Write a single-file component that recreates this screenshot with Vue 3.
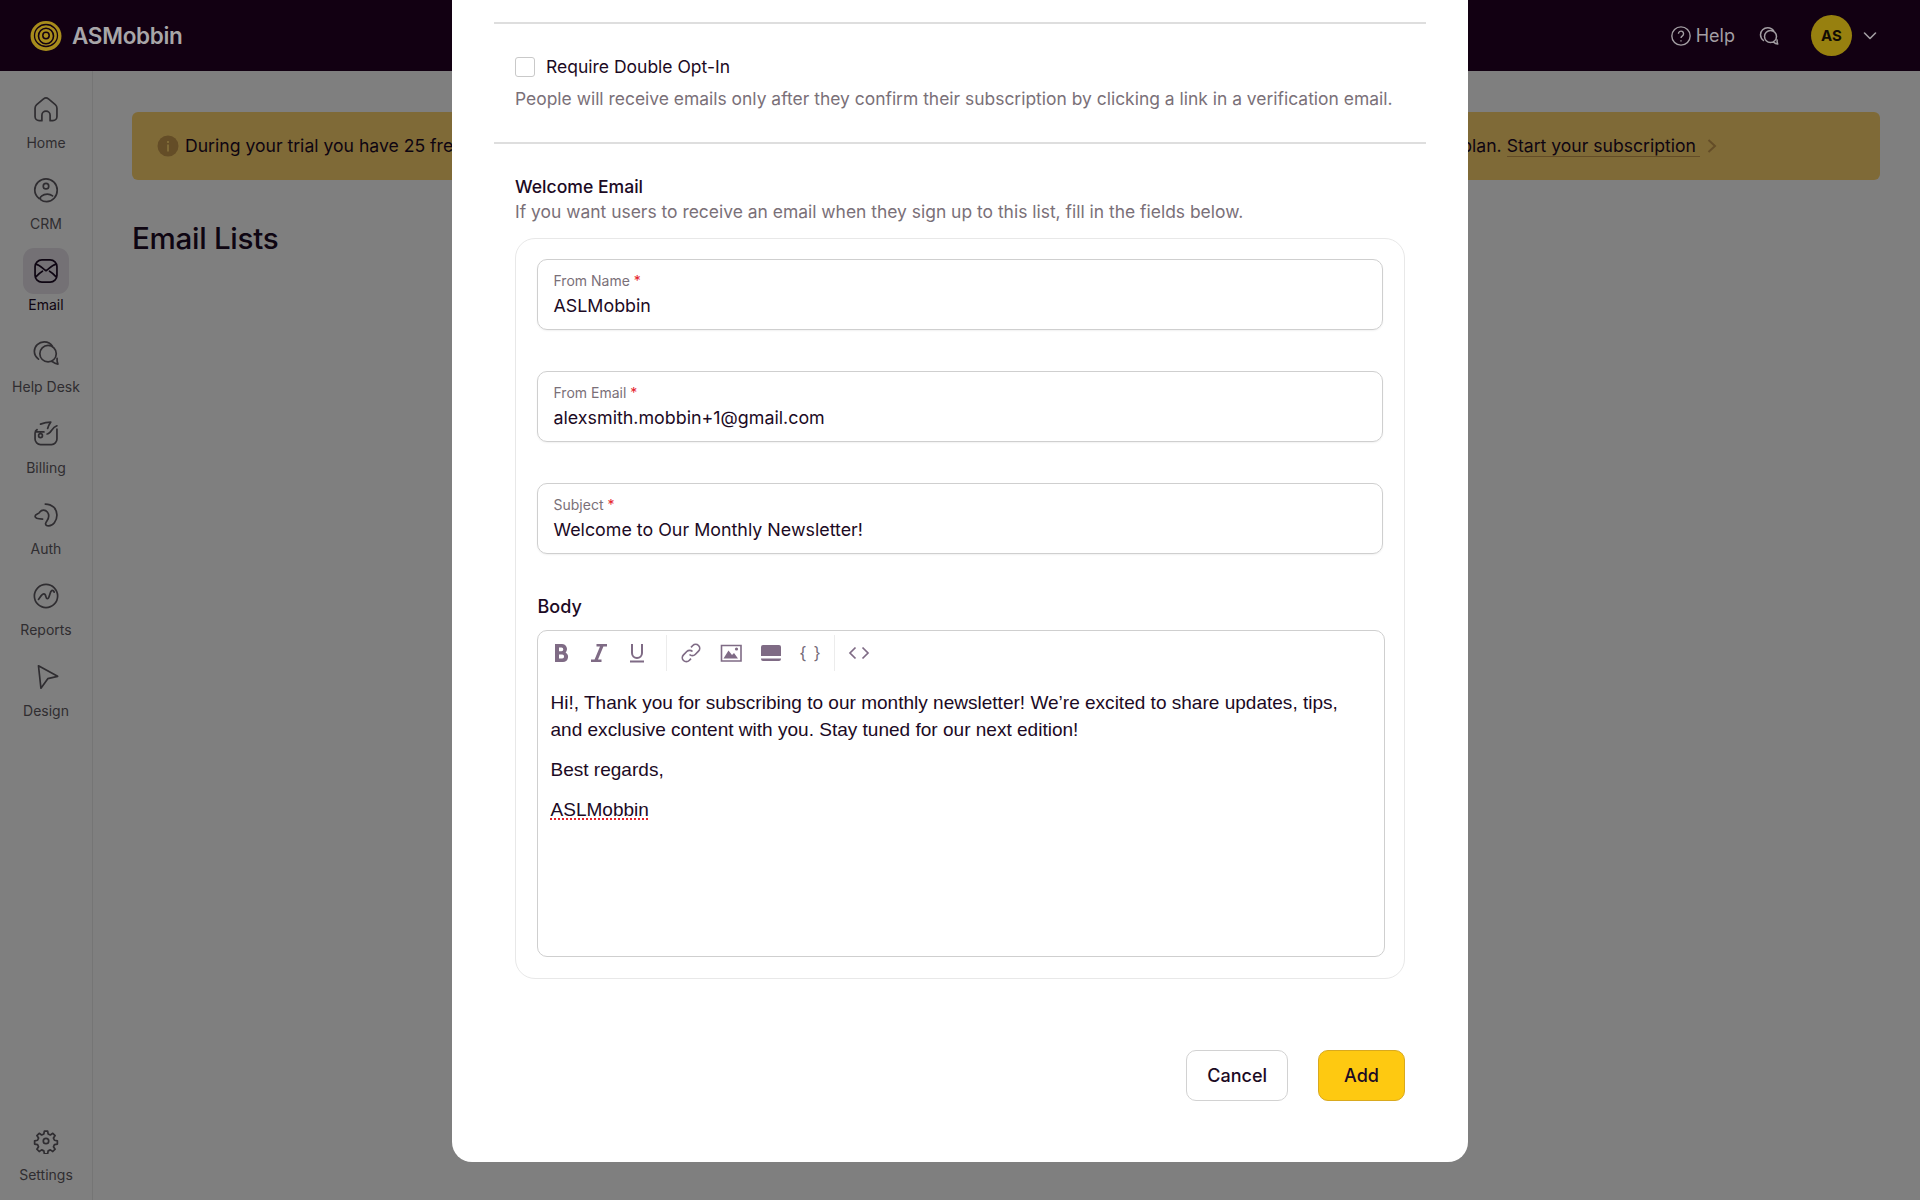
<script setup>
const navItems = [
  { label: 'Home', d: 'M9 20.500H7a3 3 0 0 1-3-3v-6c0-1 .4-2 1.200-2.700l5-4.200a2.800 2.800 0 0 1 3.600 0l5 4.200c.8.700 1.200 1.700 1.200 2.700v6a3 3 0 0 1-3 3h-2v-4a3 3 0 0 0-6 0z' },
  { label: 'CRM', d: 'M12 7.200a2 2 0 1 0 0 4 2 2 0 0 0 0-4zM7 18.200c-2-1.500-3.200-3.600-3.200-6.200a8.200 8.200 0 0 1 16.400 0c0 4.800-3.400 8.500-7.700 8.500-2.200 0-3.500-.7-4.200-1.300-.8-.8-.5-2 .4-2.700 1.200-1 2.800-1.500 4.300-1.500 1.400 0 2.800.5 3.800 1.300' },
  { label: 'Email', active: true, d: 'M9 3.800h6a5 5 0 0 1 5 5v6.400a5 5 0 0 1-5 5H9a5 5 0 0 1-5-5V8.800a5 5 0 0 1 5-5zM4.600 7c3 .6 5 3.200 7.400 4.800 2.400-1.600 4.400-4.200 7.400-4.800M4.400 16.500c1.600-1.800 3.300-3.500 5-4.400M19.600 16.500c-1.600-1.800-3.300-3.500-5-4.400' },
  { label: 'Help Desk', d: 'M13.500 6.500a6 6 0 1 0 0 12 6 6 0 0 0 0-12zM6.500 16.500C4.500 15 3.500 13 3.500 10.800c0-4 3.300-7 7.200-7 2.600 0 4.800 1.200 6 3.200M16.500 18.200c1.300 1 2.700 1.700 4.200 1.900-.5-1.300-.8-2.700-.6-4.200' },
  { label: 'Billing', d: 'M5 10.500h5.500M8 4.800c2.500-1 5-1.500 7.500-1.500-1 1.500-1.800 3-2.300 4.600M5.500 8.800C4.500 9.300 4 10.300 4 11.500v4.200a4 4 0 0 0 4 4h8a4 4 0 0 0 4-4V8.500M20 6c-1.800.6-3 2-4 3.500-.8 1.200-1.800 2.500-3.200 2.500M8 11.800a1.400 1.400 0 1 0 0 2.800 1.400 1.400 0 0 0 0-2.800z' },
  { label: 'Auth', d: 'M11.500 4c5 0 8.500 3.500 8.500 8s-3 8-6 8c-1.800 0-2.600-1-2.200-2.200.3-1 2.200-2.100 2.200-5 0-2.200-1.500-4.300-3.800-4.300C8 8.500 7.500 10 6.800 10.600 6 11.200 4 11.600 4 13c0 1.800 3 2 5.500 2' },
  { label: 'Reports', d: 'M12 3.500a8.500 8.500 0 1 1 0 17 8.500 8.500 0 0 1 0-17zM6.500 14.500c1.500-2 2.500-4 4-4 1.800 0 1 3.500 2.500 3.500 1.800 0 1.500-5 3.200-6 .8-.4 1.500.4 1.800 1.200' },
  { label: 'Design', d: 'M6.500 3.800l14 7.700-7.200 1.700-5 7z' }
]

const settingsIcon = 'M10.500 2.800h3l.5 2.700 2 .9 2.300-1.500 2.100 2.100-1.500 2.300.9 2 2.700.5v3l-2.700.5-.9 2 1.500 2.300-2.100 2.100-2.300-1.500-2 .9-.5 2.700h-3l-.5-2.700-2-.9-2.300 1.500-2.100-2.100 1.500-2.300-.9-2-2.700-.5v-3l2.700-.5.9-2-1.500-2.300 2.100-2.100 2.300 1.500 2-.9zM12 9.500a2.500 2.500 0 1 0 0 5 2.500 2.500 0 0 0 0-5z'

const fields = [
  { label: 'From Name', value: 'ASLMobbin' },
  { label: 'From Email', value: 'alexsmith.mobbin+1@gmail.com' },
  { label: 'Subject', value: 'Welcome to Our Monthly Newsletter!' }
]
</script>

<template>
  <div class="page">
    <header class="topbar">
      <div class="brand">
        <svg class="logo" viewBox="0 0 32 32">
          <ellipse cx="16" cy="16" rx="15.500" ry="15" fill="#a88c1c" />
          <ellipse cx="16" cy="15.500" rx="11.500" ry="11" fill="none" stroke="#120012" stroke-width="1.300" />
          <ellipse cx="16" cy="16" rx="7.500" ry="7.800" fill="none" stroke="#120012" stroke-width="1.600" />
          <circle cx="16" cy="15.500" r="3.200" fill="none" stroke="#120012" stroke-width="1.500" />
        </svg>
        <span class="brand-name">ASMobbin</span>
      </div>
      <div class="top-actions">
        <div class="help">
          <svg viewBox="0 0 24 24" fill="none" stroke="#a39ea3" stroke-width="1.500">
            <circle cx="12" cy="12" r="10" />
            <path d="M9.200 9.500a2.800 2.800 0 1 1 4.400 2.300c-1 .7-1.600 1.200-1.600 2.400M12 16.500v1.500" />
          </svg>
          <span>Help</span>
        </div>
        <svg class="chat" viewBox="0 0 24 24" fill="none" stroke="#a39ea3" stroke-width="1.500" stroke-linecap="round" stroke-linejoin="round">
          <path d="M13.500 6.500a6 6 0 1 0 0 12 6 6 0 0 0 0-12zM6.500 16.500C4.500 15 3.500 13 3.500 10.800c0-4 3.300-7 7.200-7 2.600 0 4.800 1.200 6 3.200M16.500 18.200c1.300 1 2.700 1.700 4.200 1.900-.5-1.300-.8-2.700-.6-4.200" />
        </svg>
        <div class="avatar">AS</div>
        <svg class="caret" viewBox="0 0 16 16" fill="none" stroke="#a39ea3" stroke-width="1.600" stroke-linecap="round" stroke-linejoin="round">
          <path d="M2.500 5l5.500 5.500L13.500 5" />
        </svg>
      </div>
    </header>

    <div class="body">
      <nav class="sidebar">
        <a v-for="item in navItems" :key="item.label" class="nav-item" :class="{ active: item.active }">
          <span class="nav-icon">
            <svg viewBox="2.500 2.500 19 19" fill="none" stroke="currentColor" stroke-width="1.250" stroke-linecap="round" stroke-linejoin="round">
              <path :d="item.d" />
            </svg>
          </span>
          <span>{{ item.label }}</span>
        </a>
        <a class="nav-item settings">
          <span class="nav-icon">
            <svg viewBox="0 0 24 24" fill="none" stroke="currentColor" stroke-width="1.600" stroke-linejoin="round">
              <path :d="settingsIcon" />
            </svg>
          </span>
          <span>Settings</span>
        </a>
      </nav>

      <main class="content">
        <div class="banner">
          <svg class="info" viewBox="0 0 22 22">
            <circle cx="11" cy="11" r="10.500" fill="#c89a4e" />
            <rect x="10" y="9.500" width="2" height="7" fill="#fed46f" />
            <rect x="10" y="6" width="2" height="2" fill="#fed46f" />
          </svg>
          <span>During your trial you have 25 free emails a month to try out, upgrade to a paid</span>
          <span class="banner-end">plan. <a class="banner-link">Start your subscription</a></span>
          <svg class="banner-chevron" viewBox="0 0 12 16" fill="none" stroke="#c89a4e" stroke-width="2">
            <path d="M2.500 2L9 8l-6.500 6" />
          </svg>
        </div>
        <h1>Email Lists</h1>
      </main>
    </div>

    <div class="scrim"></div>

    <div class="modal-wrap">
      <section class="modal">
        <hr />
        <div class="optin">
          <label class="check-row"><span class="checkbox"></span>Require Double Opt-In</label>
          <p class="hint">People will receive emails only after they confirm their subscription by clicking a link in a verification email.</p>
        </div>
        <hr />
        <div class="welcome">
          <h2>Welcome Email</h2>
          <p class="hint">If you want users to receive an email when they sign up to this list, fill in the fields below.</p>
          <div class="panel">
            <div v-for="field in fields" :key="field.label" class="field">
              <div class="field-label">{{ field.label }} <span class="req">*</span></div>
              <div class="field-value">{{ field.value }}</div>
            </div>
            <div class="body-label">Body</div>
            <div class="editor">
              <div class="toolbar">
                <div class="tool-group first">
                  <svg viewBox="0 0 24 24" fill="#7f6b85"><path d="M6 3h7a5 5 0 0 1 3.600 8.400A5.200 5.200 0 0 1 14 21H6zm4 3.600v3.600h2.500a1.800 1.800 0 0 0 0-3.600zm0 7v3.800h3.200a1.900 1.900 0 0 0 0-3.800z" /></svg>
                  <svg viewBox="0 0 24 24" fill="#7f6b85"><path d="M9.500 3H20v2.500h-3.600L11 18.500h3.500V21H4v-2.500h3.600L13 5.500H9.500z" /></svg>
                  <svg viewBox="0 0 24 24" fill="none" stroke="#7f6b85" stroke-width="2"><path d="M7 3v9a5 5 0 0 0 10 0V3M5 20.500h14" /></svg>
                </div>
                <div class="tool-group">
                  <svg viewBox="0 0 24 24" fill="none" stroke="#7f6b85" stroke-width="1.700"><path d="M10.500 13.500a4 4 0 0 0 5.700 0l3.300-3.300a4 4 0 0 0-5.700-5.700l-1.800 1.800M13.500 10.500a4 4 0 0 0-5.700 0l-3.300 3.300a4 4 0 0 0 5.700 5.700l1.800-1.800" /></svg>
                  <svg viewBox="0 0 24 24">
                    <path fill="none" stroke="#7f6b85" stroke-width="1.600" d="M2.500 4.500h19.500v15.500H2.500z" />
                    <path fill="#7f6b85" d="M4.500 17.500l5-8 3.500 4.500 2-2 4 5.500z" />
                    <circle cx="17.500" cy="8" r="1.600" fill="#7f6b85" />
                  </svg>
                  <svg viewBox="0 0 24 24"><path fill="#7f6b85" d="M4 4h16a2 2 0 0 1 2 2v9H2V6a2 2 0 0 1 2-2zM2 17.500h20V18a2 2 0 0 1-2 2H4a2 2 0 0 1-2-2z" /></svg>
                  <span class="tool-text">{ }</span>
                </div>
                <div class="tool-group last">
                  <svg viewBox="0 0 24 24" fill="none" stroke="#7f6b85" stroke-width="1.700"><path d="M8.500 6.500L3 12l5.500 5.500M15.500 6.500L21 12l-5.500 5.500" /></svg>
                </div>
              </div>
              <div class="editor-text">
                <p>Hi!, Thank you for subscribing to our monthly newsletter! We’re excited to share updates, tips, and exclusive content with you. Stay tuned for our next edition!</p>
                <p>Best regards,</p>
                <p><span class="misspelt">ASLMobbin</span></p>
              </div>
            </div>
          </div>
        </div>
        <footer class="modal-actions">
          <button class="btn">Cancel</button>
          <button class="btn primary">Add</button>
        </footer>
      </section>
    </div>
  </div>
</template>

<style>
html,
body {
  margin: 0;
  background: #808080;
}
</style>

<style scoped>
.page {
  position: relative;
  width: 1920px;
  height: 1200px;
  overflow: hidden;
  background: #fff;
  font-family: Inter, "Liberation Sans", sans-serif;
  color: #1c0a24;
}

.topbar {
  height: 71px;
  background: #120012;
  display: flex;
  align-items: center;
  justify-content: space-between;
  padding: 0 42px 0 30px;
}
.brand {
  display: flex;
  align-items: center;
  gap: 10px;
}
.logo {
  width: 32px;
  height: 32px;
}
.brand-name {
  font-size: 22.500px;
  font-weight: 600;
  color: #a8a6a8;
  letter-spacing: -0.3px;
}
.top-actions {
  display: flex;
  align-items: center;
}
.help {
  display: flex;
  align-items: center;
  gap: 4px;
  font-size: 18px;
  color: #a39ea3;
}
.help svg {
  width: 22px;
  height: 22px;
}
.chat {
  width: 24px;
  height: 24px;
  margin-left: 22px;
}
.avatar {
  width: 41px;
  height: 41px;
  border-radius: 50%;
  margin-left: 30px;
  background: #97800f;
  color: #120c04;
  font-size: 15px;
  font-weight: 700;
  display: flex;
  align-items: center;
  justify-content: center;
}
.caret {
  width: 16px;
  height: 16px;
  margin-left: 10px;
}

.body {
  display: flex;
  height: 1129px;
}
.sidebar {
  width: 92px;
  flex: none;
  border-right: 1px solid #eaeaea;
  display: flex;
  flex-direction: column;
  align-items: center;
  padding-top: 15px;
  color: #5f5b62;
}
.nav-item {
  height: 81.200px;
  display: flex;
  flex-direction: column;
  align-items: center;
  font-size: 14px;
  line-height: 20px;
}
.nav-icon {
  width: 46px;
  height: 46px;
  display: flex;
  align-items: center;
  justify-content: center;
  border-radius: 11px;
  margin-bottom: 1px;
}
.nav-icon svg {
  width: 26px;
  height: 26px;
}
.nav-item.active {
  color: #1c0a24;
}
.nav-item.active .nav-icon {
  background: #e8e3ea;
}
.nav-item.settings {
  margin-top: auto;
  height: 82px;
}

.content {
  flex: 1;
  padding: 41px 40px 0 39px;
}
.banner {
  height: 68px;
  box-sizing: border-box;
  padding: 0 0 2px 25px;
  background: #fed46f;
  border-radius: 6px;
  display: flex;
  align-items: center;
  font-size: 17.600px;
}
.info {
  width: 22px;
  height: 22px;
  margin: 2px 6px 0 0;
  flex: none;
}
.banner-end {
  margin-left: auto;
}
.banner-link {
  border-bottom: 1px solid #c89a4e;
  padding-right: 4px;
}
.banner-chevron {
  width: 12px;
  height: 16px;
  margin: 2px 162.500px 0 5.500px;
}
h1 {
  margin: 38px 0 0;
  font-size: 29.600px;
  line-height: 40px;
  font-weight: 500;
  letter-spacing: -0.3px;
}

.scrim {
  position: absolute;
  inset: 71px 0 0 0;
  background: rgba(0, 0, 0, 0.5);
}

.modal-wrap {
  position: absolute;
  inset: 0;
  display: flex;
  justify-content: center;
  align-items: flex-start;
}
.modal {
  width: 1016px;
  height: 1162px;
  box-sizing: border-box;
  padding: 22px 42px 0;
  background: #fff;
  border-radius: 0 0 20px 20px;
}
hr {
  margin: 0;
  border: 0;
  height: 2px;
  background: #dedede;
}
.optin {
  padding: 33px 21px 31px;
}
.check-row {
  display: flex;
  align-items: center;
  gap: 11px;
  font-size: 17.500px;
  line-height: 20px;
}
.checkbox {
  width: 18px;
  height: 18px;
  border: 1.500px solid #c9c9c9;
  border-radius: 3px;
}
.hint {
  margin: 0;
  font-size: 17.450px;
  line-height: 24px;
  color: #7a7078;
}
.optin .hint {
  margin-top: 10px;
}
.welcome {
  padding: 31px 21px 0;
}
.welcome .hint {
  margin-top: 1px;
}
h2 {
  margin: 0;
  font-size: 17.600px;
  line-height: 24px;
  font-weight: 500;
}
.panel {
  margin-top: 14px;
  border: 1.500px solid #e8e8e8;
  border-radius: 20px;
  padding: 20px 19.500px 21px 20.500px;
}
.field {
  height: 71px;
  box-sizing: border-box;
  margin-right: 2px;
  margin-bottom: 41px;
  padding: 12px 15px 0 16px;
  border: 1.500px solid #cfcfcf;
  border-radius: 10px;
  box-shadow: 0 1px 2px rgba(0, 0, 0, 0.06);
}
.field-label {
  font-size: 14px;
  line-height: 18px;
  color: #7a7078;
}
.req {
  color: #e5222a;
}
.field-value {
  margin-top: 3px;
  font-size: 17.850px;
  line-height: 26px;
}
.body-label {
  padding-left: 1px;
  font-size: 18px;
  line-height: 24px;
  font-weight: 500;
}
.editor {
  height: 327px;
  box-sizing: border-box;
  margin-top: 11px;
  border: 1.500px solid #cfcfcf;
  border-radius: 10px;
}
.toolbar {
  display: flex;
  align-items: center;
  padding: 4px 0 0 11px;
  height: 36px;
}
.tool-group {
  display: flex;
  align-items: center;
  gap: 16px;
  height: 36px;
  padding: 0 11px 0 12px;
  border-right: 1px solid #ececec;
}
.tool-group.first {
  padding-left: 0;
  gap: 14px;
  padding-right: 17px;
}
.tool-group.last {
  border: 0;
}
.tool-group svg,
.tool-text {
  width: 24px;
  height: 24px;
  flex: none;
}
.tool-text {
  font-size: 17px;
  line-height: 24px;
  text-align: center;
  white-space: nowrap;
  letter-spacing: 1px;
  color: #746a78;
}
.editor-text {
  padding: 18px 30px 0 13px;
  font-family: "Liberation Sans", Arial, sans-serif;
  font-size: 19.050px;
  line-height: 27px;
}
.editor-text p {
  margin: 0 0 13px;
}
.misspelt {
  text-decoration: underline dotted #e5222a;
  text-underline-offset: 3px;
}
.modal-actions {
  display: flex;
  justify-content: flex-end;
  gap: 30px;
  margin-top: 71px;
  padding-right: 21px;
}
.btn {
  height: 51px;
  box-sizing: border-box;
  padding: 0 20px;
  border: 1.500px solid #d2d2d2;
  border-radius: 10px;
  background: #fff;
  font-family: inherit;
  font-size: 18px;
  font-weight: 500;
  color: #1c0a24;
}
.btn.primary {
  width: 87px;
  background: #fec911;
  border-color: #d9a91e;
}
</style>
